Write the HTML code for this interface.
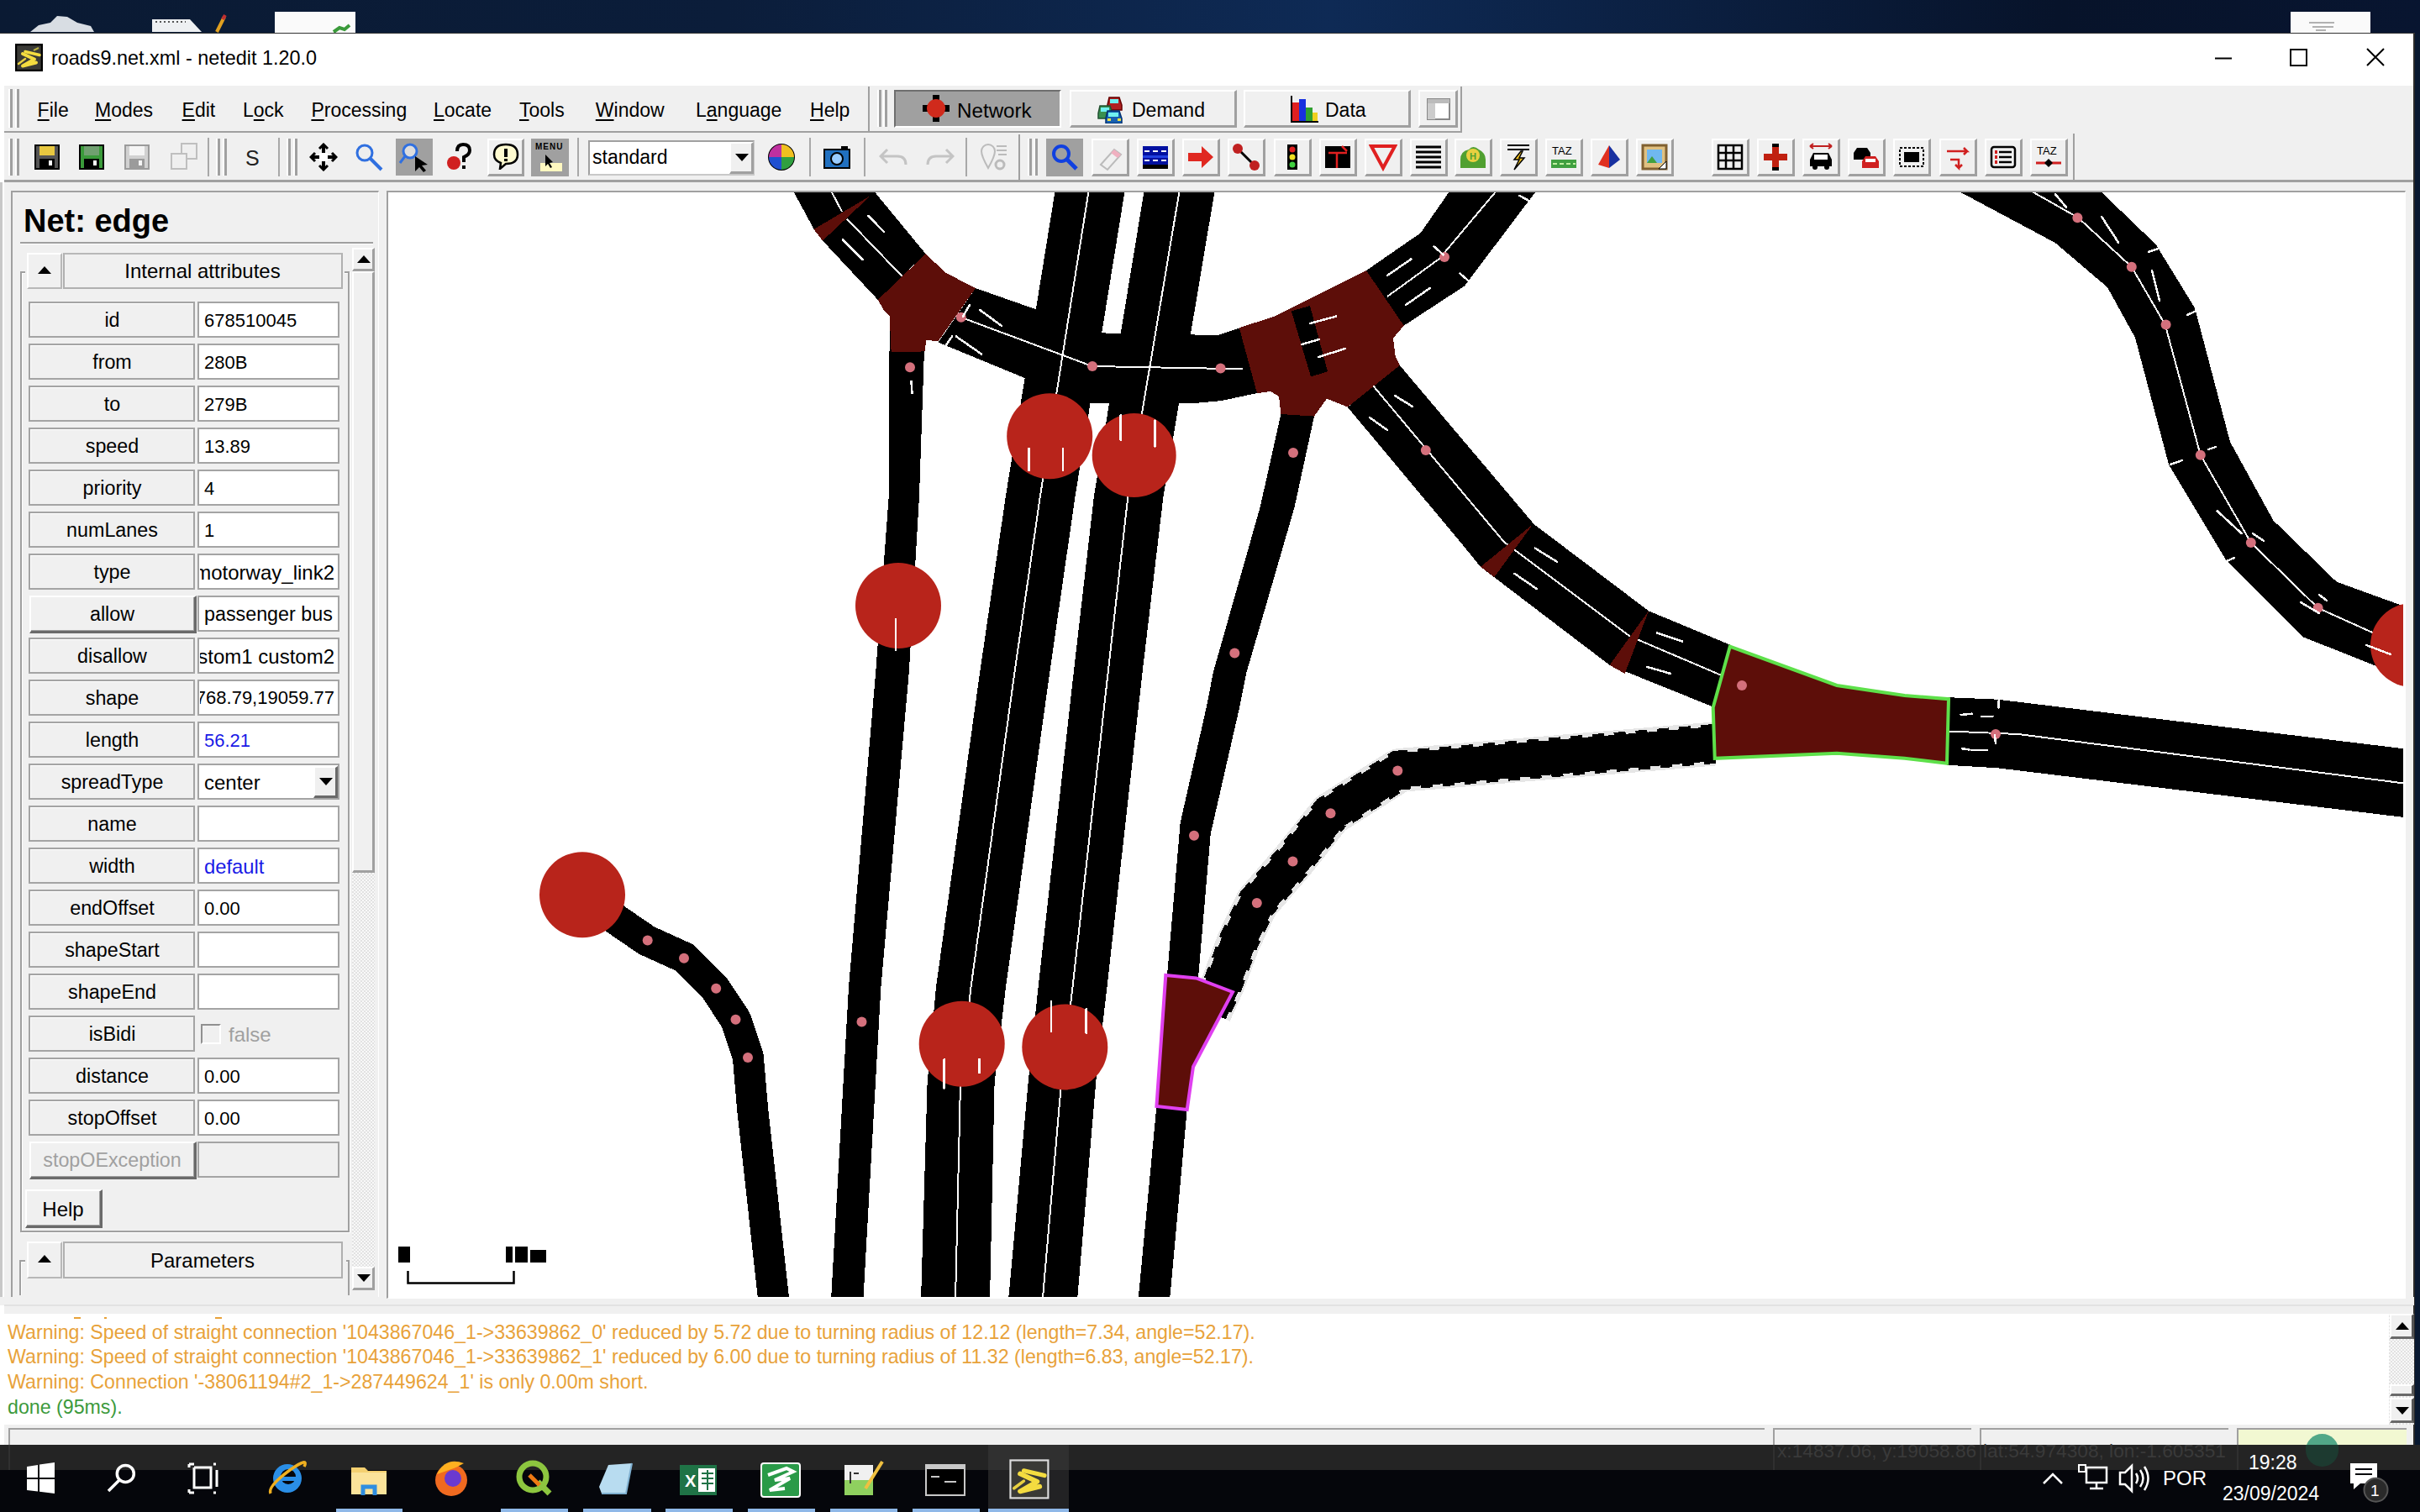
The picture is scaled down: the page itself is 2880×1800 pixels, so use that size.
<!DOCTYPE html>
<html><head><meta charset="utf-8">
<style>
*{margin:0;padding:0;box-sizing:border-box}
html,body{width:2880px;height:1800px;overflow:hidden;background:#081830;font-family:"Liberation Sans",sans-serif;color:#000}
.a{position:absolute}
.t{position:absolute;white-space:nowrap;line-height:1}
.btn{position:absolute;background:#f0f0f0;border-top:2px solid #fff;border-left:2px solid #fff;border-right:3px solid #a0a0a0;border-bottom:3px solid #a0a0a0}
.fld{position:absolute;background:#fff;border:3px solid #a0a0a0;border-right-color:#c8c8c8;border-bottom-color:#c8c8c8}
.grip{position:absolute;width:5px;border-left:2px solid #fff;border-right:3px solid #a0a0a0}
.u{text-decoration:underline;text-decoration-thickness:2px;text-underline-offset:3px}
</style></head><body>
<div class="a" style="left:0;top:0;width:2880px;height:40px;background:linear-gradient(90deg,#0a1a33 0%,#0b1d3a 30%,#0e2a55 55%,#0b1f40 70%,#07132a 85%,#081530 100%)"></div><svg class="a" style="left:0;top:0" width="2880" height="40"><path d="M36 38 L46 30 L60 27 L68 19 L80 20 L92 27 L108 31 L112 38 Z" fill="#d8dde3"/><path d="M181 38 L181 23 L226 23 L240 38 Z" fill="#eef0f2"/><path d="M185 26 h36" stroke="#555" stroke-width="2" stroke-dasharray="2 3"/><path d="M258 38 L267 20" stroke="#e0a020" stroke-width="4"/><path d="M265 23 L268 18" stroke="#c03030" stroke-width="4"/><rect x="327" y="14" width="96" height="25" fill="#fafafa"/><path d="M397 38 L404 33 L410 35 L416 30" stroke="#3a9a3a" stroke-width="4" fill="none"/><rect x="2726" y="14" width="95" height="25" fill="#fafafa"/><path d="M2748 27 h30 M2752 32 h25 M2756 36 h12" stroke="#999" stroke-width="1.5"/></svg><div class="a" style="left:0;top:40px;width:2873px;height:1710px;background:#f0f0f0"></div><div class="a" style="left:2872px;top:39px;width:2px;height:1711px;background:#2a2a2a"></div><div class="a" style="left:0;top:39px;width:2874px;height:1px;background:#333"></div><div class="a" style="left:0;top:40px;width:2872px;height:62px;background:#fff"></div><div class="a" style="left:0;top:40px;width:5px;height:1710px;background:#fff"></div><svg class="a" style="left:18px;top:52px" width="33" height="33"><rect x="1" y="1" width="31" height="31" fill="#3a3a36" stroke="#000" stroke-width="2.5"/><path d="M12 9.5 L29 13.5" stroke="#f4dc40" stroke-width="3.5" stroke-linecap="round"/><path d="M9 12 L23 18.5 L9 26.5 L25 22.5" stroke="#f4dc40" stroke-width="4" fill="none" stroke-linejoin="round" stroke-linecap="round"/><path d="M4 24 L12 18" stroke="#e8d040" stroke-width="2.5" stroke-linecap="round"/><path d="M22 8 L28 5" stroke="#b8b040" stroke-width="2"/></svg><div class="t" style="left:61px;top:58px;font-size:23.4px;color:#000">roads9.net.xml - netedit 1.20.0</div><svg class="a" style="left:2600px;top:40px" width="272" height="62"><path d="M36 29.5 h20" stroke="#000" stroke-width="2"/><rect x="126" y="19" width="19" height="19" stroke="#000" stroke-width="2" fill="none"/><path d="M217 18 L237 38 M237 18 L217 38" stroke="#000" stroke-width="2"/></svg><div class="a" style="left:5px;top:102px;width:2867px;height:55px;background:#f0f0f0"></div><div class="a" style="left:5px;top:156px;width:1735px;height:2px;background:#a0a0a0"></div><div class="a" style="left:2467px;top:159px;width:2px;height:2px;background:#a0a0a0"></div><div class="grip" style="left:10px;top:106px;height:46px"></div><div class="grip" style="left:18px;top:106px;height:46px"></div><div class="t" style="left:44.6px;top:120px;font-size:23px"><span class="u">F</span>ile</div><div class="t" style="left:113px;top:120px;font-size:23px"><span class="u">M</span>odes</div><div class="t" style="left:216.6px;top:120px;font-size:23px"><span class="u">E</span>dit</div><div class="t" style="left:289px;top:120px;font-size:23px">L<span class="u">o</span>ck</div><div class="t" style="left:370.4px;top:120px;font-size:23px"><span class="u">P</span>rocessing</div><div class="t" style="left:516px;top:120px;font-size:23px"><span class="u">L</span>ocate</div><div class="t" style="left:618px;top:120px;font-size:23px"><span class="u">T</span>ools</div><div class="t" style="left:708.8px;top:120px;font-size:23px"><span class="u">W</span>indow</div><div class="t" style="left:828px;top:120px;font-size:23px">L<span class="u">a</span>nguage</div><div class="t" style="left:964px;top:120px;font-size:23px"><span class="u">H</span>elp</div><div class="a" style="left:1033px;top:103px;width:2px;height:54px;background:#a0a0a0"></div><div class="grip" style="left:1044px;top:107px;height:44px"></div><div class="grip" style="left:1051px;top:107px;height:44px"></div><div class="a" style="left:1064px;top:107px;width:199px;height:45px;background:#a0a0a0;border-top:2px solid #6e6e6e;border-left:2px solid #6e6e6e;border-bottom:2px solid #fff;border-right:2px solid #fff"></div><svg class="a" style="left:1097px;top:112px" width="34" height="34"><rect x="13" y="1" width="8" height="6" fill="#000"/><rect x="13" y="27" width="8" height="6" fill="#000"/><rect x="1" y="13" width="6" height="8" fill="#000"/><rect x="27" y="13" width="6" height="8" fill="#000"/><circle cx="17" cy="17" r="11" fill="#d02a1c"/></svg><div class="t" style="left:1139px;top:119.5px;font-size:24.2px">Network</div><div class="btn" style="left:1273px;top:107px;width:199px;height:45px"></div><svg class="a" style="left:1305px;top:111px" width="36" height="36"><path d="M13 14 L15 5 H27 L30 14 V20 H13 Z" fill="#b02020" stroke="#600" stroke-width="1.5"/><rect x="16" y="7" width="10" height="5" fill="#70f0f0"/><path d="M2 24 L4 15 H16 L19 24 V30 H2 Z" fill="#3a9050" stroke="#205030" stroke-width="1.5"/><rect x="5" y="17" width="10" height="5" fill="#70f0f0"/><path d="M11 30 L13 21 H27 L30 30 V36 H11 Z" fill="#1860b0" stroke="#003070" stroke-width="1.5"/><rect x="14" y="23" width="12" height="5" fill="#70f0f0"/><rect x="13" y="30" width="4" height="3" fill="#f0e040"/><rect x="25" y="30" width="4" height="3" fill="#f0e040"/></svg><div class="t" style="left:1347px;top:120px;font-size:23px">Demand</div><div class="btn" style="left:1480px;top:107px;width:199px;height:45px"></div><svg class="a" style="left:1536px;top:112px" width="34" height="34"><rect x="2" y="10" width="8" height="22" fill="#e02020"/><rect x="10" y="6" width="8" height="26" fill="#1830e0"/><rect x="18" y="16" width="8" height="16" fill="#30a030"/><rect x="26" y="22" width="6" height="10" fill="#f0d020"/><path d="M1 2 v31 h32" stroke="#000" stroke-width="2" fill="none"/></svg><div class="t" style="left:1577px;top:120px;font-size:23px">Data</div><div class="btn" style="left:1688px;top:107px;width:47px;height:45px"></div><svg class="a" style="left:1697px;top:116px" width="30" height="28"><rect x="2" y="2" width="26" height="24" fill="#fff" stroke="#888" stroke-width="2"/><rect x="2" y="2" width="26" height="5" fill="#bbb"/><rect x="2" y="7" width="9" height="19" fill="#ccc"/></svg><div class="a" style="left:1738px;top:103px;width:2px;height:54px;background:#a0a0a0"></div><div class="a" style="left:5px;top:214px;width:2867px;height:3px;background:#a0a0a0"></div><div class="grip" style="left:10px;top:165px;height:44px"></div><div class="grip" style="left:18px;top:165px;height:44px"></div><div class="grip" style="left:257px;top:165px;height:44px"></div><div class="grip" style="left:265px;top:165px;height:44px"></div><div class="grip" style="left:341px;top:165px;height:44px"></div><div class="grip" style="left:349px;top:165px;height:44px"></div><div class="grip" style="left:1223px;top:165px;height:44px"></div><div class="grip" style="left:1230px;top:165px;height:44px"></div><div class="a" style="left:247px;top:164px;width:2px;height:46px;background:#a8a8a8"></div><div class="a" style="left:331px;top:164px;width:2px;height:46px;background:#a8a8a8"></div><div class="a" style="left:687px;top:164px;width:2px;height:46px;background:#a8a8a8"></div><div class="a" style="left:963px;top:164px;width:2px;height:46px;background:#a8a8a8"></div><div class="a" style="left:1028px;top:164px;width:2px;height:46px;background:#a8a8a8"></div><div class="a" style="left:1149px;top:164px;width:2px;height:46px;background:#a8a8a8"></div><div class="a" style="left:1212px;top:160px;width:2px;height:56px;background:#a0a0a0"></div><div class="a" style="left:2467px;top:160px;width:2px;height:56px;background:#a0a0a0"></div><svg class="a" style="left:41px;top:172px;" width="30" height="30"><rect x="1" y="1" width="28" height="28" fill="#555" stroke="#000" stroke-width="2"/><rect x="6" y="2" width="18" height="11" fill="#e8c840"/><rect x="6" y="17" width="18" height="11" fill="#000"/><rect x="17" y="19" width="4" height="6" fill="#fff"/></svg><svg class="a" style="left:94px;top:172px;" width="30" height="30"><rect x="1" y="1" width="28" height="28" fill="#3a9a3a" stroke="#000" stroke-width="2"/><rect x="6" y="2" width="18" height="11" fill="#70a070"/><rect x="6" y="17" width="18" height="11" fill="#000"/><rect x="17" y="19" width="4" height="6" fill="#fff"/></svg><svg class="a" style="left:148px;top:172px;opacity:.35;" width="30" height="30"><rect x="1" y="1" width="28" height="28" fill="#999" stroke="#000" stroke-width="2"/><rect x="6" y="2" width="18" height="11" fill="#fff"/><rect x="6" y="17" width="18" height="11" fill="#000"/><rect x="17" y="19" width="4" height="6" fill="#fff"/></svg><svg class="a" style="left:202px;top:170px;opacity:.4" width="34" height="34"><rect x="14" y="1" width="18" height="18" fill="#eee" stroke="#777" stroke-width="2"/><rect x="2" y="13" width="18" height="18" fill="#eee" stroke="#777" stroke-width="2"/></svg><div class="t" style="left:292px;top:176px;font-size:25px;color:#222">S</div><svg class="a" style="left:368px;top:170px" width="34" height="34"><path d="M17 2 L17 32 M2 17 L32 17" stroke="#000" stroke-width="4"/><path d="M12 7 L17 2 L22 7 M12 27 L17 32 L22 27 M7 12 L2 17 L7 22 M27 12 L32 17 L27 22" stroke="#000" stroke-width="3" fill="none"/><rect x="12" y="12" width="10" height="10" fill="#fff"/></svg><svg class="a" style="left:422px;top:170px" width="34" height="34"><circle cx="12" cy="12" r="9" fill="#eee" stroke="#3070e0" stroke-width="3"/><path d="M19 19 L32 32" stroke="#3070e0" stroke-width="4"/></svg><div class="a" style="left:471px;top:165px;width:44px;height:44px;background:#a0a0a0"></div><svg class="a" style="left:474px;top:168px" width="38" height="38"><circle cx="14" cy="12" r="8" fill="#ddd" stroke="#3070e0" stroke-width="3"/><path d="M8 18 L2 26" stroke="#3070e0" stroke-width="3"/><path d="M20 18 L20 36 L25 31 L30 37 L33 35 L28 29 L35 28 Z" fill="#000"/></svg><svg class="a" style="left:530px;top:170px" width="34" height="34"><circle cx="10" cy="24" r="8" fill="#d02020"/><path d="M14 10 Q14 2 21 2 Q29 2 29 9 Q29 14 22 17 L22 23" stroke="#000" stroke-width="4" fill="none"/><rect x="20" y="27" width="4" height="4" fill="#000"/></svg><div class="btn" style="left:580px;top:165px;width:44px;height:45px"></div><svg class="a" style="left:586px;top:170px" width="32" height="32"><path d="M16 2 Q30 2 30 14 Q30 25 16 25 L9 31 L10 24 Q2 21 2 14 Q2 2 16 2 Z" fill="#fffbd0" stroke="#000" stroke-width="2.5"/><rect x="14" y="7" width="4" height="10" fill="#000"/><rect x="14" y="19" width="4" height="3" fill="#000"/></svg><div class="a" style="left:632px;top:165px;width:45px;height:45px;background:#a0a0a0"></div><div class="t" style="left:637px;top:170px;font-size:10px;font-weight:bold;letter-spacing:1px">MENU</div><svg class="a" style="left:637px;top:182px" width="36" height="24"><rect x="6" y="12" width="26" height="10" fill="#fff8c0"/><path d="M12 2 L12 16 L15 13 L18 18 L20 17 L17 12 L21 11 Z" fill="#000"/></svg><div class="fld" style="left:700px;top:167px;width:198px;height:42px;border-width:2px"></div><div class="t" style="left:705px;top:176px;font-size:23px">standard</div><div class="btn" style="left:868px;top:169px;width:29px;height:38px"></div><svg class="a" style="left:873px;top:182px" width="20" height="12"><path d="M2 1 L18 1 L10 10 Z" fill="#000"/></svg><svg class="a" style="left:913px;top:170px" width="34" height="34"><circle cx="17" cy="17" r="15" fill="#e06020" stroke="#000" stroke-width="2"/><path d="M17 17 L17 2 A15 15 0 0 1 32 17 Z" fill="#f0c020"/><path d="M17 17 L32 17 A15 15 0 0 1 17 32 Z" fill="#30a040"/><path d="M17 17 L17 32 A15 15 0 0 1 2 17 Z" fill="#2050d0"/><path d="M17 17 L2 17 A15 15 0 0 1 17 2 Z" fill="#c030a0"/></svg><svg class="a" style="left:979px;top:172px" width="34" height="30"><rect x="2" y="6" width="30" height="22" fill="#2070c0" stroke="#000" stroke-width="2"/><circle cx="17" cy="17" r="7" fill="#9cf" stroke="#000" stroke-width="2"/><rect x="22" y="2" width="8" height="4" fill="#000"/></svg><svg class="a" style="left:1046px;top:172px;opacity:.5" width="90" height="30"><path d="M10 6 L2 14 L10 22 M2 14 H22 Q32 14 32 24" stroke="#999" stroke-width="3" fill="none"/><path d="M80 6 L88 14 L80 22 M88 14 H68 Q58 14 58 24" stroke="#999" stroke-width="3" fill="none"/></svg><svg class="a" style="left:1166px;top:170px;opacity:.5" width="34" height="34"><path d="M10 30 Q2 16 2 10 A8 8 0 0 1 18 10 Q18 16 10 30Z" fill="none" stroke="#888" stroke-width="2"/><path d="M20 4 h12 M20 9 h12 M22 14 h10" stroke="#888" stroke-width="2"/><circle cx="24" cy="26" r="5" fill="none" stroke="#888" stroke-width="3"/></svg><div class="a" style="left:1245px;top:165px;width:44px;height:45px;background:#a0a0a0"></div><svg class="a" style="left:1250px;top:170px" width="34" height="34"><circle cx="13" cy="13" r="9" fill="none" stroke="#1040e0" stroke-width="4"/><path d="M19 19 L31 31" stroke="#1040e0" stroke-width="5"/></svg><div class="btn" style="left:1299px;top:165px;width:45px;height:45px"></div><div class="btn" style="left:1353px;top:165px;width:45px;height:45px"></div><div class="btn" style="left:1407px;top:165px;width:45px;height:45px"></div><div class="btn" style="left:1461px;top:165px;width:45px;height:45px"></div><div class="btn" style="left:1516px;top:165px;width:45px;height:45px"></div><div class="btn" style="left:1570px;top:165px;width:45px;height:45px"></div><div class="btn" style="left:1624px;top:165px;width:45px;height:45px"></div><div class="btn" style="left:1678px;top:165px;width:45px;height:45px"></div><div class="btn" style="left:1731px;top:165px;width:45px;height:45px"></div><div class="btn" style="left:1785px;top:165px;width:45px;height:45px"></div><div class="btn" style="left:1839px;top:165px;width:45px;height:45px"></div><div class="btn" style="left:1893px;top:165px;width:45px;height:45px"></div><div class="btn" style="left:1947px;top:165px;width:45px;height:45px"></div><div class="btn" style="left:2037px;top:165px;width:45px;height:45px"></div><div class="btn" style="left:2091px;top:165px;width:45px;height:45px"></div><div class="btn" style="left:2145px;top:165px;width:45px;height:45px"></div><div class="btn" style="left:2199px;top:165px;width:45px;height:45px"></div><div class="btn" style="left:2253px;top:165px;width:45px;height:45px"></div><div class="btn" style="left:2308px;top:165px;width:45px;height:45px"></div><div class="btn" style="left:2362px;top:165px;width:45px;height:45px"></div><div class="btn" style="left:2416px;top:165px;width:45px;height:45px"></div><svg class="a" style="left:1304px;top:170px" width="34" height="34"><path d="M6 26 L22 8 L30 14 L14 32 Z" fill="#f0f0f0" stroke="#bbb" stroke-width="2"/><path d="M18 12 L26 18 L30 14 L22 8 Z" fill="#f0b0c0"/></svg><svg class="a" style="left:1358px;top:170px" width="34" height="34"><rect x="2" y="4" width="30" height="22" fill="#0010a0"/><rect x="2" y="15" width="30" height="3" fill="#2040e0"/><path d="M4 10 h6 M14 10 h6 M24 10 h6 M4 21 h6 M14 21 h6 M24 21 h6" stroke="#fff" stroke-width="2"/><rect x="2" y="26" width="30" height="5" fill="#000"/></svg><svg class="a" style="left:1412px;top:170px" width="34" height="34"><path d="M2 12 H18 V4 L32 17 L18 30 V22 H2 Z" fill="#e02820"/></svg><svg class="a" style="left:1466px;top:170px" width="34" height="34"><path d="M7 7 L27 27" stroke="#000" stroke-width="3"/><circle cx="7" cy="7" r="6" fill="#c02020"/><circle cx="27" cy="27" r="6" fill="#c02020"/></svg><svg class="a" style="left:1521px;top:170px" width="34" height="34"><rect x="11" y="2" width="12" height="30" fill="#000"/><circle cx="17" cy="8" r="3.5" fill="#e02020"/><circle cx="17" cy="17" r="3.5" fill="#f0e020"/><circle cx="17" cy="26" r="3.5" fill="#40d040"/></svg><svg class="a" style="left:1575px;top:170px" width="34" height="34"><rect x="2" y="4" width="30" height="26" fill="#000"/><path d="M6 12 H28 M16 12 V30 M22 4 L28 10" stroke="#e02020" stroke-width="2.5" fill="none"/></svg><svg class="a" style="left:1629px;top:170px" width="34" height="34"><path d="M3 4 H31 L17 30 Z" fill="none" stroke="#e02020" stroke-width="4"/></svg><svg class="a" style="left:1683px;top:170px" width="34" height="34"><path d="M2 5 H32 M2 11 H32 M2 17 H32 M2 23 H32 M2 29 H32" stroke="#000" stroke-width="3"/></svg><svg class="a" style="left:1736px;top:170px" width="34" height="34"><path d="M2 30 V20 Q2 10 12 8 Q17 2 24 8 Q32 12 32 20 V30 Z" fill="#50a030"/><circle cx="17" cy="15" r="8" fill="#e8d040"/><text x="13" y="20" font-size="11" font-family="Liberation Sans" font-weight="bold" fill="#50a030">H</text></svg><svg class="a" style="left:1790px;top:170px" width="34" height="34"><path d="M4 3 H30 M4 8 H30" stroke="#000" stroke-width="2"/><path d="M20 10 L12 20 H18 L12 32 L24 18 H18 L22 10 Z" fill="#f0c020" stroke="#000" stroke-width="1.5"/></svg><svg class="a" style="left:1844px;top:170px" width="34" height="34"><text x="3" y="14" font-size="13" font-family="Liberation Sans" fill="#000">TAZ</text><rect x="2" y="20" width="30" height="10" fill="#40a040"/><path d="M4 25 h5 M12 25 h5 M20 25 h5 M28 25 h3" stroke="#c0f0a0" stroke-width="2"/></svg><svg class="a" style="left:1898px;top:170px" width="34" height="34"><path d="M17 3 L4 26 L17 30 Z" fill="#e03020"/><path d="M17 3 L17 30 L30 20 Z" fill="#1830a0"/></svg><svg class="a" style="left:1952px;top:170px" width="34" height="34"><rect x="3" y="3" width="28" height="28" fill="#e0c080" stroke="#806030" stroke-width="3"/><rect x="8" y="8" width="18" height="16" fill="#70b8f0"/><path d="M8 24 L14 16 L20 24 Z" fill="#40a040"/><path d="M22 31 L31 22 V31 Z" fill="#fff" stroke="#000" stroke-width="1"/></svg><svg class="a" style="left:2042px;top:170px" width="34" height="34"><path d="M3 3 H31 V31 H3 Z M3 12 H31 M3 21 H31 M12 3 V31 M21 3 V31" stroke="#000" stroke-width="2.5" fill="none"/></svg><svg class="a" style="left:2096px;top:170px" width="34" height="34"><path d="M17 3 V31 M3 17 H31" stroke="#c02010" stroke-width="8"/><rect x="13" y="1" width="8" height="4" fill="#000"/><rect x="13" y="29" width="8" height="4" fill="#000"/></svg><svg class="a" style="left:2150px;top:170px" width="34" height="34"><path d="M4 4 H30 M4 4 L8 1 M4 4 L8 7 M30 4 L26 1 M30 4 L26 7" stroke="#c02020" stroke-width="2" fill="none"/><path d="M4 28 V20 L8 12 H26 L30 20 V28 Z" fill="#000"/><rect x="9" y="14" width="16" height="6" fill="#fff"/><circle cx="10" cy="29" r="3" fill="#000"/><circle cx="24" cy="29" r="3" fill="#000"/></svg><svg class="a" style="left:2204px;top:170px" width="34" height="34"><path d="M2 20 V12 L6 6 H18 L22 12 V20 Z" fill="#000"/><path d="M12 30 V22 L16 16 H28 L32 22 V30 Z" fill="#d02020"/><rect x="16" y="19" width="12" height="4" fill="#fff"/></svg><svg class="a" style="left:2258px;top:170px" width="34" height="34"><rect x="3" y="6" width="28" height="22" fill="none" stroke="#000" stroke-width="2" stroke-dasharray="3 2"/><rect x="8" y="11" width="18" height="12" fill="#000"/></svg><svg class="a" style="left:2313px;top:170px" width="34" height="34"><path d="M4 10 H28 L24 6 M28 10 L24 14 M8 20 H18 V30 L14 26 M18 30 L22 26" stroke="#d02020" stroke-width="2.5" fill="none"/></svg><svg class="a" style="left:2367px;top:170px" width="34" height="34"><rect x="3" y="5" width="28" height="24" rx="3" fill="none" stroke="#000" stroke-width="2.5"/><path d="M12 11 H27 M12 17 H27 M12 23 H27" stroke="#000" stroke-width="2.5"/><rect x="7" y="9" width="3" height="4" fill="#d02020"/><rect x="7" y="15" width="3" height="4" fill="#d02020"/><rect x="7" y="21" width="3" height="4" fill="#d02020"/></svg><svg class="a" style="left:2421px;top:170px" width="34" height="34"><text x="3" y="14" font-size="13" font-family="Liberation Sans" fill="#000">TAZ</text><path d="M2 24 H32" stroke="#d02020" stroke-width="3"/><path d="M17 19 L22 24 L17 29 L12 24 Z" fill="#000"/></svg><div class="a" style="left:0;top:217px;width:3px;height:1336px;background:#c8c8c8"></div><div class="a" style="left:13px;top:227px;width:438px;height:1318px;border-top:2px solid #a0a0a0;border-left:2px solid #a0a0a0;border-right:1px solid #fff;border-bottom:1px solid #fff"></div><div class="t" style="left:28px;top:243.8px;font-size:38px;font-weight:bold">Net: edge</div><div class="a" style="left:24px;top:288px;width:420px;height:2px;background:#a0a0a0"></div><div class="a" style="left:24px;top:290px;width:420px;height:1px;background:#fff"></div><div class="a" style="left:419px;top:295px;width:27px;height:1240px;background:repeating-conic-gradient(#e2e2e2 0 25%,#f8f8f8 0 50%) 0 0/4px 4px"></div><div class="btn" style="left:419px;top:295px;width:27px;height:28px"></div><svg class="a" style="left:423px;top:301px" width="20" height="14"><path d="M2 12 L18 12 L10 3 Z" fill="#000"/></svg><div class="btn" style="left:419px;top:323px;width:27px;height:716px"></div><div class="btn" style="left:419px;top:1508px;width:27px;height:28px"></div><svg class="a" style="left:423px;top:1514px" width="20" height="14"><path d="M2 3 L18 3 L10 12 Z" fill="#000"/></svg><div class="a" style="left:24px;top:323px;width:392px;height:1144px;border:2px solid #a0a0a0;border-right-color:#a0a0a0;border-bottom-color:#a0a0a0;box-shadow:inset 1px 1px 0 #fff, 1px 1px 0 #fff"></div><div class="a" style="left:30px;top:299px;width:380px;height:46px;background:#f0f0f0"></div><div class="a" style="left:32px;top:301px;width:42px;height:43px;background:#f0f0f0;border:2px solid #b8b8b8;border-top-color:#fff;border-left-color:#fff"></div><svg class="a" style="left:43px;top:314px" width="20" height="14"><path d="M2 12 L18 12 L10 3 Z" fill="#000"/></svg><div class="a" style="left:75px;top:301px;width:333px;height:43px;background:#f0f0f0;border:2px solid #b0b0b0;border-top-color:#b8b8b8"></div><div class="t" style="left:41.0px;top:310.7px;width:400px;text-align:center;font-size:24px;">Internal attributes</div><div class="a" style="left:34px;top:359px;width:198px;height:43px;background:#f0f0f0;border:2px solid #a4a4a4;box-shadow:inset 1px 1px 0 #fff"></div><div class="t" style="left:38.5px;top:370.3px;width:190px;text-align:center;font-size:23.3px;color:#000">id</div><div class="a" style="left:235px;top:359px;width:169px;height:43px;background:#fff;border:2px solid #a4a4a4"></div><div class="t" style="left:243px;top:371.4px;font-size:22px;">678510045</div><div class="a" style="left:34px;top:409px;width:198px;height:43px;background:#f0f0f0;border:2px solid #a4a4a4;box-shadow:inset 1px 1px 0 #fff"></div><div class="t" style="left:38.5px;top:420.3px;width:190px;text-align:center;font-size:23.3px;color:#000">from</div><div class="a" style="left:235px;top:409px;width:169px;height:43px;background:#fff;border:2px solid #a4a4a4"></div><div class="t" style="left:243px;top:421.4px;font-size:22px;">280B</div><div class="a" style="left:34px;top:459px;width:198px;height:43px;background:#f0f0f0;border:2px solid #a4a4a4;box-shadow:inset 1px 1px 0 #fff"></div><div class="t" style="left:38.5px;top:470.3px;width:190px;text-align:center;font-size:23.3px;color:#000">to</div><div class="a" style="left:235px;top:459px;width:169px;height:43px;background:#fff;border:2px solid #a4a4a4"></div><div class="t" style="left:243px;top:471.4px;font-size:22px;">279B</div><div class="a" style="left:34px;top:509px;width:198px;height:43px;background:#f0f0f0;border:2px solid #a4a4a4;box-shadow:inset 1px 1px 0 #fff"></div><div class="t" style="left:38.5px;top:520.3px;width:190px;text-align:center;font-size:23.3px;color:#000">speed</div><div class="a" style="left:235px;top:509px;width:169px;height:43px;background:#fff;border:2px solid #a4a4a4"></div><div class="t" style="left:243px;top:521.4px;font-size:22px;">13.89</div><div class="a" style="left:34px;top:559px;width:198px;height:43px;background:#f0f0f0;border:2px solid #a4a4a4;box-shadow:inset 1px 1px 0 #fff"></div><div class="t" style="left:38.5px;top:570.3px;width:190px;text-align:center;font-size:23.3px;color:#000">priority</div><div class="a" style="left:235px;top:559px;width:169px;height:43px;background:#fff;border:2px solid #a4a4a4"></div><div class="t" style="left:243px;top:571.4px;font-size:22px;">4</div><div class="a" style="left:34px;top:609px;width:198px;height:43px;background:#f0f0f0;border:2px solid #a4a4a4;box-shadow:inset 1px 1px 0 #fff"></div><div class="t" style="left:38.5px;top:620.3px;width:190px;text-align:center;font-size:23.3px;color:#000">numLanes</div><div class="a" style="left:235px;top:609px;width:169px;height:43px;background:#fff;border:2px solid #a4a4a4"></div><div class="t" style="left:243px;top:621.4px;font-size:22px;">1</div><div class="a" style="left:34px;top:659px;width:198px;height:43px;background:#f0f0f0;border:2px solid #a4a4a4;box-shadow:inset 1px 1px 0 #fff"></div><div class="t" style="left:38.5px;top:670.3px;width:190px;text-align:center;font-size:23.3px;color:#000">type</div><div class="a" style="left:235px;top:659px;width:169px;height:43px;background:#fff;border:2px solid #a4a4a4"></div><div class="a" style="left:238px;top:661px;width:163px;height:39px;overflow:hidden"><div class="t" style="right:3px;top:8.7px;font-size:24px">motorway_link2</div></div><div class="a" style="left:35px;top:709px;width:199px;height:45px;background:#f0f0f0;border-top:2px solid #fff;border-left:2px solid #fff;border-right:3px solid #6a6a6a;border-bottom:3px solid #6a6a6a;box-shadow:inset -1px -1px 0 #a0a0a0"></div><div class="t" style="left:38.5px;top:720.3px;width:190px;text-align:center;font-size:23.3px;color:#000">allow</div><div class="a" style="left:235px;top:709px;width:169px;height:43px;background:#fff;border:2px solid #a4a4a4"></div><div class="t" style="left:243px;top:720.3px;font-size:23.3px;">passenger bus</div><div class="a" style="left:34px;top:759px;width:198px;height:43px;background:#f0f0f0;border:2px solid #a4a4a4;box-shadow:inset 1px 1px 0 #fff"></div><div class="t" style="left:38.5px;top:770.3px;width:190px;text-align:center;font-size:23.3px;color:#000">disallow</div><div class="a" style="left:235px;top:759px;width:169px;height:43px;background:#fff;border:2px solid #a4a4a4"></div><div class="a" style="left:238px;top:761px;width:163px;height:39px;overflow:hidden"><div class="t" style="right:3px;top:8.7px;font-size:24px">custom1 custom2</div></div><div class="a" style="left:34px;top:809px;width:198px;height:43px;background:#f0f0f0;border:2px solid #a4a4a4;box-shadow:inset 1px 1px 0 #fff"></div><div class="t" style="left:38.5px;top:820.3px;width:190px;text-align:center;font-size:23.3px;color:#000">shape</div><div class="a" style="left:235px;top:809px;width:169px;height:43px;background:#fff;border:2px solid #a4a4a4"></div><div class="a" style="left:238px;top:811px;width:163px;height:39px;overflow:hidden"><div class="t" style="right:3px;top:8.7px;font-size:22px">14768.79,19059.77</div></div><div class="a" style="left:34px;top:859px;width:198px;height:43px;background:#f0f0f0;border:2px solid #a4a4a4;box-shadow:inset 1px 1px 0 #fff"></div><div class="t" style="left:38.5px;top:870.3px;width:190px;text-align:center;font-size:23.3px;color:#000">length</div><div class="a" style="left:235px;top:859px;width:169px;height:43px;background:#fff;border:2px solid #a4a4a4"></div><div class="t" style="left:243px;top:871.4px;font-size:22px;color:#1a1ae6">56.21</div><div class="a" style="left:34px;top:909px;width:198px;height:43px;background:#f0f0f0;border:2px solid #a4a4a4;box-shadow:inset 1px 1px 0 #fff"></div><div class="t" style="left:38.5px;top:920.3px;width:190px;text-align:center;font-size:23.3px;color:#000">spreadType</div><div class="a" style="left:235px;top:909px;width:169px;height:43px;background:#fff;border:2px solid #a4a4a4"></div><div class="t" style="left:243px;top:919.7px;font-size:24px;">center</div><div class="a" style="left:373px;top:912px;width:29px;height:38px;background:#f0f0f0;border-top:2px solid #fff;border-left:2px solid #fff;border-right:3px solid #6a6a6a;border-bottom:3px solid #6a6a6a"></div><svg class="a" style="left:378px;top:925px" width="20" height="12"><path d="M2 1 L18 1 L10 10 Z" fill="#000"/></svg><div class="a" style="left:34px;top:959px;width:198px;height:43px;background:#f0f0f0;border:2px solid #a4a4a4;box-shadow:inset 1px 1px 0 #fff"></div><div class="t" style="left:38.5px;top:970.3px;width:190px;text-align:center;font-size:23.3px;color:#000">name</div><div class="a" style="left:235px;top:959px;width:169px;height:43px;background:#fff;border:2px solid #a4a4a4"></div><div class="a" style="left:34px;top:1009px;width:198px;height:43px;background:#f0f0f0;border:2px solid #a4a4a4;box-shadow:inset 1px 1px 0 #fff"></div><div class="t" style="left:38.5px;top:1020.3px;width:190px;text-align:center;font-size:23.3px;color:#000">width</div><div class="a" style="left:235px;top:1009px;width:169px;height:43px;background:#fff;border:2px solid #a4a4a4"></div><div class="t" style="left:243px;top:1019.9px;font-size:23.8px;color:#1a1ae6">default</div><div class="a" style="left:34px;top:1059px;width:198px;height:43px;background:#f0f0f0;border:2px solid #a4a4a4;box-shadow:inset 1px 1px 0 #fff"></div><div class="t" style="left:38.5px;top:1070.3px;width:190px;text-align:center;font-size:23.3px;color:#000">endOffset</div><div class="a" style="left:235px;top:1059px;width:169px;height:43px;background:#fff;border:2px solid #a4a4a4"></div><div class="t" style="left:243px;top:1071.4px;font-size:22px;">0.00</div><div class="a" style="left:34px;top:1109px;width:198px;height:43px;background:#f0f0f0;border:2px solid #a4a4a4;box-shadow:inset 1px 1px 0 #fff"></div><div class="t" style="left:38.5px;top:1120.3px;width:190px;text-align:center;font-size:23.3px;color:#000">shapeStart</div><div class="a" style="left:235px;top:1109px;width:169px;height:43px;background:#fff;border:2px solid #a4a4a4"></div><div class="a" style="left:34px;top:1159px;width:198px;height:43px;background:#f0f0f0;border:2px solid #a4a4a4;box-shadow:inset 1px 1px 0 #fff"></div><div class="t" style="left:38.5px;top:1170.3px;width:190px;text-align:center;font-size:23.3px;color:#000">shapeEnd</div><div class="a" style="left:235px;top:1159px;width:169px;height:43px;background:#fff;border:2px solid #a4a4a4"></div><div class="a" style="left:34px;top:1209px;width:198px;height:43px;background:#f0f0f0;border:2px solid #a4a4a4;box-shadow:inset 1px 1px 0 #fff"></div><div class="t" style="left:38.5px;top:1220.3px;width:190px;text-align:center;font-size:23.3px;color:#000">isBidi</div><div class="a" style="left:239px;top:1219px;width:24px;height:24px;border-top:2px solid #909090;border-left:2px solid #909090;border-right:2px solid #fff;border-bottom:2px solid #fff;background:#f0f0f0"></div><div class="t" style="left:272px;top:1219.7px;font-size:24px;color:#a0a0a0">false</div><div class="a" style="left:34px;top:1259px;width:198px;height:43px;background:#f0f0f0;border:2px solid #a4a4a4;box-shadow:inset 1px 1px 0 #fff"></div><div class="t" style="left:38.5px;top:1270.3px;width:190px;text-align:center;font-size:23.3px;color:#000">distance</div><div class="a" style="left:235px;top:1259px;width:169px;height:43px;background:#fff;border:2px solid #a4a4a4"></div><div class="t" style="left:243px;top:1271.4px;font-size:22px;">0.00</div><div class="a" style="left:34px;top:1309px;width:198px;height:43px;background:#f0f0f0;border:2px solid #a4a4a4;box-shadow:inset 1px 1px 0 #fff"></div><div class="t" style="left:38.5px;top:1320.3px;width:190px;text-align:center;font-size:23.3px;color:#000">stopOffset</div><div class="a" style="left:235px;top:1309px;width:169px;height:43px;background:#fff;border:2px solid #a4a4a4"></div><div class="t" style="left:243px;top:1321.4px;font-size:22px;">0.00</div><div class="a" style="left:35px;top:1359px;width:199px;height:45px;background:#f0f0f0;border-top:2px solid #fff;border-left:2px solid #fff;border-right:3px solid #6a6a6a;border-bottom:3px solid #6a6a6a;box-shadow:inset -1px -1px 0 #a0a0a0"></div><div class="t" style="left:38.5px;top:1370.3px;width:190px;text-align:center;font-size:23.3px;color:#a0a0a0">stopOException</div><div class="a" style="left:235px;top:1359px;width:169px;height:43px;background:#f0f0f0;border:2px solid #a4a4a4"></div><div class="a" style="left:30px;top:1416px;width:92px;height:46px;background:#f0f0f0;border-top:2px solid #fff;border-left:2px solid #fff;border-right:3px solid #6a6a6a;border-bottom:3px solid #6a6a6a;box-shadow:inset -1px -1px 0 #a0a0a0"></div><div class="t" style="left:30.0px;top:1427.7px;width:90px;text-align:center;font-size:24px;">Help</div><div class="a" style="left:23px;top:1500px;width:393px;height:42px;border:2px solid #a0a0a0;border-bottom:none;box-shadow:inset 1px 1px 0 #fff"></div><div class="a" style="left:30px;top:1476px;width:382px;height:47px;background:#f0f0f0"></div><div class="a" style="left:32px;top:1478px;width:42px;height:44px;background:#f0f0f0;border:2px solid #b8b8b8;border-top-color:#fff;border-left-color:#fff"></div><svg class="a" style="left:43px;top:1491px" width="20" height="14"><path d="M2 12 L18 12 L10 3 Z" fill="#000"/></svg><div class="a" style="left:75px;top:1478px;width:333px;height:44px;background:#f0f0f0;border:2px solid #b0b0b0"></div><div class="t" style="left:41.0px;top:1488.7px;width:400px;text-align:center;font-size:24px;">Parameters</div><div class="a" style="left:0;top:1544px;width:2873px;height:10px;background:#f0f0f0"></div><div class="a" style="left:460px;top:227px;width:2403px;height:1319px;border-top:2px solid #a0a0a0;border-left:2px solid #a0a0a0;border-right:1px solid #fff;border-bottom:1px solid #fff;background:#fff"></div><svg class="a" style="left:0;top:0" width="2880" height="1800" viewBox="0 0 2880 1800"><defs><clipPath id="cv"><rect x="462" y="229" width="2398" height="1315"/></clipPath></defs><g clip-path="url(#cv)" shape-rendering="crispEdges"><polygon points="942.7,225.0 1038.0,225.0 1101.4,302.0 1044.8,357.0 979.0,286.5 968.5,272.6" fill="#000"/><polygon points="968.5,273.0 1036.0,233.0 979.0,286.5" fill="#5d0e09"/><path d="M990 229 L1002 252 M1008 260.7 L1074.6 330" stroke="#fff" stroke-width="2" fill="none"/><polygon points="1058.7,376.7 1057.8,590.0 1042.2,800.0 1010.0,1175.0 989.0,1548.0 1027.3,1548.0 1048.4,1175.0 1081.8,800.0 1094.0,590.0 1100.4,405.0" fill="#000"/><polygon points="1256.0,225.0 1197.0,590.0 1166.2,800.0 1114.0,1175.0 1103.6,1289.0 1096.0,1548.0 1178.0,1548.0 1183.6,1289.0 1197.0,1175.0 1249.3,800.0 1279.7,590.0 1339.0,225.0" fill="#000"/><polygon points="1362.0,225.0 1302.0,590.0 1277.8,800.0 1235.6,1175.0 1224.0,1285.0 1200.0,1548.0 1282.0,1548.0 1304.5,1285.0 1317.5,1175.0 1359.6,800.0 1384.6,590.0 1446.0,225.0" fill="#000"/><polygon points="1161.0,343.0 1232.0,368.0 1310.6,396.4 1449.0,399.0 1476.0,390.0 1496.0,468.0 1454.0,477.0 1426.6,479.5 1296.0,479.5 1215.8,448.5 1116.6,407.6" fill="#000"/><polyline points="1296,225 1238,590 1207.5,800 1155.5,1175 1143,1289 1137,1548" stroke="#fff" stroke-width="2" fill="none"/><polyline points="1404,225 1342.5,590 1318.7,800 1276.5,1175 1263.4,1285 1240.7,1548" stroke="#fff" stroke-width="2" fill="none"/><polygon points="1044.8,356.9 1101.4,302.3 1126.2,325.2 1161.0,343.0 1116.3,406.5 1102.4,404.5 1100.4,418.4 1060.7,419.4 1058.7,376.7 1052.8,370.8" fill="#5d0e09"/><polyline points="1143.8,377.8 1300,436 1479,439.3" stroke="#fff" stroke-width="2" fill="none"/><polygon points="1474.8,390.2 1517.0,376.6 1626.0,322.0 1670.7,387.7 1658.0,402.6 1660.8,425.0 1665.8,434.9 1603.8,484.5 1579.0,474.5 1564.0,495.6 1524.4,493.0 1522.0,472.0 1512.0,465.9 1496.0,468.3" fill="#5d0e09"/><polygon points="1536.8,370.4 1559.0,364.0 1580.0,442.3 1560.0,448.5" fill="#000"/><polygon points="1626.0,322.0 1690.6,277.4 1727.0,225.0 1830.0,225.0 1742.7,340.6 1670.7,387.7" fill="#000"/><polyline points="1651,353 1713,308 1781,227" stroke="#fff" stroke-width="2" fill="none"/><polygon points="1524.4,493.0 1499.6,604.0 1443.9,800.0 1436.2,840.0 1404.7,979.4 1389.0,1161.0 1426.0,1164.0 1440.7,993.0 1475.6,840.0 1483.6,800.0 1540.5,604.0 1564.0,495.6" fill="#000"/><polygon points="1376.4,1317.0 1354.5,1548.0 1392.0,1548.0 1412.7,1321.0" fill="#000"/><polygon points="1603.8,484.7 1737.7,645.0 1762.0,674.8 1915.6,791.8 2040.7,842.3 2058.8,767.6 1962.0,727.3 1825.5,624.0 1665.8,434.9" fill="#000"/><polyline points="1634.3,459.4 1789.8,645 1939.8,757.5 2048.7,804" stroke="#fff" stroke-width="2" fill="none"/><polygon points="1824.0,624.4 1762.0,674.8 1778.4,686.9" fill="#5d0e09"/><polygon points="1962.0,727.3 1915.6,791.8 1933.7,801.9" fill="#5d0e09"/><polygon points="2319.0,830.2 2377.5,832.7 2865.0,891.8 2865.0,973.5 2377.5,914.3 2316.6,910.7" fill="#000"/><polyline points="2319,870.5 2402,874 2865,933" stroke="#fff" stroke-width="2" fill="none"/><path d="M2040,885.5 L1665.5,917 L1583.5,969 L1538.5,1025.5 L1495.8,1075 L1474,1121 L1455,1172 L1440,1205" stroke="#e6e6e6" stroke-width="52" fill="none" stroke-linejoin="round"/><path d="M2040,885.5 L1665.5,917 L1583.5,969 L1538.5,1025.5 L1495.8,1075 L1474,1121 L1455,1172 L1440,1205" stroke="#000" stroke-width="41" fill="none"/><path d="M2040,885.5 L1665.5,917 L1583.5,969 L1538.5,1025.5 L1495.8,1075 L1474,1121 L1455,1172 L1440,1205" stroke="#000" stroke-width="47" stroke-dasharray="14 12" fill="none"/><polygon points="2058.8,769.6 2186.0,816.0 2266.6,828.0 2319.0,832.2 2317.0,908.8 2266.6,902.8 2186.0,896.7 2040.7,902.8 2038.7,842.3" fill="#5d0e09" stroke="#5ee04a" stroke-width="4" shape-rendering="auto"/><polygon points="1387.3,1161.0 1423.6,1164.5 1467.0,1181.0 1420.0,1270.0 1412.7,1321.0 1376.4,1317.0" fill="#5d0e09" stroke="#e040f0" stroke-width="4" shape-rendering="auto"/><polygon points="2326.0,225.0 2445.8,289.0 2508.0,342.0 2541.0,402.0 2581.0,553.0 2650.0,668.0 2740.0,758.0 2827.0,792.5 2870.0,809.0 2870.0,725.0 2780.8,692.7 2705.4,619.5 2654.0,526.0 2612.0,366.6 2565.6,291.0 2497.0,225.0" fill="#000"/><polyline points="2413,225 2473,259 2536.8,317.7 2576.7,386.5 2618.8,541.8 2678.8,646 2758.6,723.8 2870,774" stroke="#fff" stroke-width="2" fill="none"/><path d="M693,1065 L733.7,1095 L769.7,1119.6 L814,1139.7 L851,1176.7 L875.5,1213.8 L890.3,1258 L895.6,1320 L921,1550" stroke="#000" stroke-width="37" fill="none" stroke-linejoin="round"/><circle cx="1069" cy="721" r="51" fill="#b8241b" shape-rendering="auto"/><circle cx="1249.2" cy="519.2" r="51" fill="#b8241b" shape-rendering="auto"/><circle cx="1349.7" cy="542.1" r="50" fill="#b8241b" shape-rendering="auto"/><circle cx="1144.7" cy="1242.7" r="51" fill="#b8241b" shape-rendering="auto"/><circle cx="1267.3" cy="1246.4" r="51" fill="#b8241b" shape-rendering="auto"/><circle cx="693" cy="1065.2" r="51" fill="#b8241b" shape-rendering="auto"/><circle cx="2871" cy="768" r="50" fill="#b8241b" shape-rendering="auto"/><circle cx="1143.8" cy="377.8" r="6" fill="#d4707c" shape-rendering="auto"/><circle cx="1300" cy="436" r="6" fill="#d4707c" shape-rendering="auto"/><circle cx="1452.6" cy="438.6" r="6" fill="#d4707c" shape-rendering="auto"/><circle cx="1083" cy="437.3" r="6" fill="#d4707c" shape-rendering="auto"/><circle cx="1719" cy="306" r="6" fill="#d4707c" shape-rendering="auto"/><circle cx="1539" cy="539" r="6" fill="#d4707c" shape-rendering="auto"/><circle cx="1469.3" cy="777.6" r="6" fill="#d4707c" shape-rendering="auto"/><circle cx="1421" cy="994.7" r="6" fill="#d4707c" shape-rendering="auto"/><circle cx="1696.8" cy="536" r="6" fill="#d4707c" shape-rendering="auto"/><circle cx="2073" cy="816" r="6" fill="#d4707c" shape-rendering="auto"/><circle cx="2375" cy="874" r="6" fill="#d4707c" shape-rendering="auto"/><circle cx="1663.3" cy="917.6" r="6" fill="#d4707c" shape-rendering="auto"/><circle cx="1583.5" cy="968.2" r="6" fill="#d4707c" shape-rendering="auto"/><circle cx="1538.5" cy="1025.5" r="6" fill="#d4707c" shape-rendering="auto"/><circle cx="1495.8" cy="1075" r="6" fill="#d4707c" shape-rendering="auto"/><circle cx="2472.4" cy="259.2" r="6" fill="#d4707c" shape-rendering="auto"/><circle cx="2536.8" cy="317.7" r="6" fill="#d4707c" shape-rendering="auto"/><circle cx="2577.6" cy="386.5" r="6" fill="#d4707c" shape-rendering="auto"/><circle cx="2618.8" cy="541.8" r="6" fill="#d4707c" shape-rendering="auto"/><circle cx="2678.8" cy="646" r="6" fill="#d4707c" shape-rendering="auto"/><circle cx="2758.6" cy="723.8" r="6" fill="#d4707c" shape-rendering="auto"/><circle cx="770.7" cy="1119.6" r="6" fill="#d4707c" shape-rendering="auto"/><circle cx="814" cy="1140.7" r="6" fill="#d4707c" shape-rendering="auto"/><circle cx="852.2" cy="1176.7" r="6" fill="#d4707c" shape-rendering="auto"/><circle cx="875.5" cy="1213.8" r="6" fill="#d4707c" shape-rendering="auto"/><circle cx="890" cy="1259" r="6" fill="#d4707c" shape-rendering="auto"/><circle cx="1025.5" cy="1216.5" r="6" fill="#d4707c" shape-rendering="auto"/><path d="M1033 256.7 L1051.8 275.6 M1003 285.5 L1027 309.3 M1165.9 368.8 L1191.7 387.7 M1138 400.6 L1167.9 421.4 M1154 362.9 L1146 376.7 M1133 400.6 L1124 413.5 M1084.5 454 L1085.5 468 M1559 385 L1590 376.6 M1549 410 L1570 404 M1569 425 L1601 415 M1651 328 L1679.4 308.4 M1673 363 L1701.7 343 M1706.7 293.5 L1717.9 303.4 M1737.7 325.7 L1747.6 334.4 M1808 232.7 L1819.6 239 M1660 471 L1681 484 M1630 497 L1651 512 M1826.8 652.6 L1853 668.8 M1802.6 683 L1828.8 701 M1972 753.5 L2002 763.6 M1960 793.8 L1988.2 802 M2333.6 851 L2347 849.7 M2358 852.9 L2371.4 852.9 M2335 891.2 L2343.4 892.4 M2345.8 892.9 L2365.3 892.9 M2378.7 833.9 L2378.7 842.4 M2374 875 L2375 885 M2445.8 231 L2459 246.7 M2501 257.8 L2521.2 288.9 M2556.7 300 L2570 295.6 M2561 322 L2570 357.7 M2603 375 L2614 370 M2583 553 L2597 548 M2628 535 L2637 532 M2638.8 608.4 L2667.6 635 M2681 635 L2694 644 M2650 668 L2659 664 M2738 717 L2760 730 M2760 708 L2769 715 M2743 762 L2747 775 M2816.3 768 L2845 779 M1224.5 534 L1224.5 560 M1265 534 L1265 560 M1333.6 494 L1333.6 524 M1374.5 500.6 L1374.5 531.6 M1065.8 737 L1065.8 773.6 M1123.6 1261 L1123.6 1295.5 M1165.5 1261 L1165.5 1277 M1251 1191.8 L1251 1228 M1292.7 1201 L1292.7 1230" stroke="#fff" stroke-width="2.5" fill="none" stroke-linecap="round"/></g><rect x="474" y="1484" width="14" height="19" fill="#000"/><rect x="602" y="1484" width="8" height="19" fill="#000"/><rect x="613" y="1484" width="15" height="19" fill="#000"/><rect x="631" y="1488" width="19" height="15" fill="#000"/><path d="M485.5 1513 V1527.5 H611.5 V1513" stroke="#000" stroke-width="2.5" fill="none"/></svg><div class="a" style="left:5px;top:1553px;width:2867px;height:2px;background:#e2e2e2"></div><div class="a" style="left:5px;top:1564px;width:2838px;height:132px;background:#fff"></div><div class="t" style="left:9px;top:1574.9px;font-size:23.2px;color:#e8a23a">Warning: Speed of straight connection '1043867046_1-&gt;33639862_0' reduced by 5.72 due to turning radius of 12.12 (length=7.34, angle=52.17).</div><div class="t" style="left:9px;top:1604.4px;font-size:23.2px;color:#e8a23a">Warning: Speed of straight connection '1043867046_1-&gt;33639862_1' reduced by 6.00 due to turning radius of 11.32 (length=6.83, angle=52.17).</div><div class="t" style="left:9px;top:1633.9px;font-size:23.2px;color:#e8a23a">Warning: Connection '-38061194#2_1-&gt;287449624_1' is only 0.00m short.</div><div class="t" style="left:9px;top:1664.2px;font-size:23.2px;color:#3c9a3c">done (95ms).</div><svg class="a" style="left:0;top:1564px" width="400" height="8"><path d="M88 5 h8 M124 5 h3 M256 5 h8" stroke="#e8a23a" stroke-width="2"/></svg><div class="a" style="left:2843px;top:1564px;width:30px;height:132px;background:repeating-conic-gradient(#e2e2e2 0 25%,#f8f8f8 0 50%) 0 0/4px 4px"></div><div class="a" style="left:2844px;top:1564px;width:29px;height:30px;background:#f0f0f0;border-top:2px solid #fff;border-left:2px solid #fff;border-right:3px solid #555;border-bottom:3px solid #6a6a6a"></div><svg class="a" style="left:2849px;top:1571px" width="20" height="14"><path d="M2 12 L18 12 L10 3 Z" fill="#000"/></svg><div class="a" style="left:2844px;top:1648px;width:29px;height:14px;background:#f0f0f0;border-top:2px solid #fff;border-left:2px solid #fff;border-right:3px solid #555;border-bottom:3px solid #6a6a6a"></div><div class="a" style="left:2844px;top:1664px;width:29px;height:30px;background:#f0f0f0;border-top:2px solid #fff;border-left:2px solid #fff;border-right:3px solid #555;border-bottom:3px solid #6a6a6a"></div><svg class="a" style="left:2849px;top:1672px" width="20" height="14"><path d="M2 3 L18 3 L10 12 Z" fill="#000"/></svg><div class="a" style="left:10px;top:1700px;width:2090px;height:60px;border-top:2px solid #a0a0a0;border-left:2px solid #a0a0a0"></div><div class="a" style="left:2110px;top:1700px;width:236px;height:60px;border-top:2px solid #a0a0a0;border-left:2px solid #a0a0a0"></div><div class="a" style="left:2356px;top:1700px;width:296px;height:60px;border-top:2px solid #a0a0a0;border-left:2px solid #a0a0a0"></div><div class="a" style="left:2662px;top:1700px;width:202px;height:60px;border-top:2px solid #a0a0a0;border-left:2px solid #a0a0a0;background:#f2f8d2"></div><div class="a" style="left:2744px;top:1707px;width:39px;height:39px;border-radius:50%;background:#52a888"></div><div class="a" style="left:0;top:1720px;width:2880px;height:30px;background:#242424"></div><div class="a" style="left:0;top:1750px;width:2880px;height:50px;background:#05060b"></div><div class="t" style="left:2115px;top:1715.8px;font-size:22.7px;color:#3a3a3a">x:14837.06, y:19058.86</div><div class="t" style="left:2360px;top:1715.8px;font-size:22.7px;color:#3a3a3a">lat:54.974308, lon:-1.605351</div><div class="a" style="left:2110px;top:1720px;width:2px;height:30px;background:#303030"></div><div class="a" style="left:2356px;top:1720px;width:2px;height:30px;background:#303030"></div><div class="a" style="left:2662px;top:1720px;width:2px;height:30px;background:#303030"></div><div class="a" style="left:10px;top:1720px;width:2px;height:30px;background:#303030"></div><div class="a" style="left:2744px;top:1720px;width:39px;height:26px;border-radius:0 0 20px 20px;background:#1d3a30"></div><svg class="a" style="left:0;top:1720px" width="1300" height="80"><path d="M32 26 L45 24 V39 H32 Z M47 23.5 L65 21 V39 H47 Z M32 41 H45 V55.5 L32 54 Z M47 41 H65 V58 L47 55.8 Z" fill="#fff"/><circle cx="149.3" cy="34.4" r="10" stroke="#fff" stroke-width="3.5" fill="none"/><path d="M142 42 L129 55" stroke="#fff" stroke-width="3.5"/><path d="M225 23 h6 M225 23 v4 M231 27 h20 v24 h-20 v-24 M225 57 h6 M225 57 v-4 M257 23 h-3 M257 57 h-3 M258 30 v20" stroke="#fff" stroke-width="3" fill="none"/><circle cx="342" cy="40" r="17" fill="#2a8ee6"/><circle cx="343" cy="38" r="9" fill="#05060b"/><rect x="330" y="38" width="28" height="5" fill="#2a8ee6"/><path d="M322 58 Q318 50 345 30 Q368 14 362 26" stroke="#f0b020" stroke-width="3.5" fill="none"/><path d="M418 27 h16 l4 4 h22 v28 h-42 Z" fill="#f4d070"/><rect x="418" y="33" width="42" height="26" fill="#fbe39a"/><path d="M432 60 v-10 h14 v10" stroke="#2f8ee0" stroke-width="5" fill="none"/><circle cx="537" cy="42" r="19" fill="#f06a20"/><circle cx="539" cy="40" r="10" fill="#6a3ad0"/><path d="M520 35 Q530 14 552 22 Q545 26 540 28" fill="#ffb020"/><circle cx="634" cy="38" r="16" stroke="#8dc63f" stroke-width="7" fill="none"/><path d="M640 44 L654 58" stroke="#8dc63f" stroke-width="7"/><path d="M630 36 L642 48" stroke="#ee7913" stroke-width="5"/><path d="M713 50 L724 24 L752 22 L745 58 L716 58 Z" fill="#b8dcf0"/><path d="M716 58 L745 58 L752 22" stroke="#7fb0d0" stroke-width="2" fill="none"/><rect x="809" y="24" width="44" height="36" fill="#1f7346"/><rect x="831" y="28" width="20" height="28" fill="#fff"/><path d="M835 34 h14 M835 40 h14 M835 46 h14 M842 30 v24" stroke="#1f7346" stroke-width="2"/><text x="815" y="50" font-family="Liberation Sans" font-size="20" font-weight="bold" fill="#fff">X</text><rect x="906" y="22" width="46" height="40" rx="3" fill="#2a9a48" stroke="#fff" stroke-width="2"/><path d="M914 36 L936 28 L944 32 L922 42 L940 40 L916 54 L934 52" stroke="#fff" stroke-width="4" fill="none"/><path d="M1005 24 h34 v36 h-34 Z" fill="#f0f0f0"/><rect x="1005" y="42" width="34" height="18" fill="#8fd05f"/><path d="M1030 52 L1050 20" stroke="#f0c040" stroke-width="4"/><path d="M1012 32 v14 M1016 34 h6" stroke="#333" stroke-width="2"/><rect x="1102" y="24" width="46" height="36" fill="#000" stroke="#c8c8c8" stroke-width="2"/><rect x="1102" y="24" width="46" height="5" fill="#c8c8c8"/><path d="M1108 38 h10 M1124 44 h14" stroke="#c8c8c8" stroke-width="2"/><rect x="1176" y="0" width="96" height="80" fill="#3a3a3a" opacity="0.55"/><g transform="translate(1201,17) scale(1.45)"><rect x="1" y="1" width="31" height="31" fill="#3a3a36" stroke="#ddd" stroke-width="1.5"/><path d="M12 9.5 L29 13.5" stroke="#f4dc40" stroke-width="3.5" stroke-linecap="round"/><path d="M9 12 L23 18.5 L9 26.5 L25 22.5" stroke="#f4dc40" stroke-width="4" fill="none" stroke-linejoin="round" stroke-linecap="round"/><path d="M4 24 L12 18" stroke="#e8d040" stroke-width="2.5" stroke-linecap="round"/></g><rect x="400" y="76" width="79" height="4" fill="#8fb8e8"/><rect x="596" y="76" width="80" height="4" fill="#8fb8e8"/><rect x="694" y="76" width="81" height="4" fill="#8fb8e8"/><rect x="792" y="76" width="80" height="4" fill="#8fb8e8"/><rect x="890" y="76" width="80" height="4" fill="#8fb8e8"/><rect x="988" y="76" width="80" height="4" fill="#8fb8e8"/><rect x="1086" y="76" width="80" height="4" fill="#8fb8e8"/><rect x="1176" y="76" width="96" height="4" fill="#8fb8e8"/></svg><svg class="a" style="left:2420px;top:1720px" width="460" height="80"><path d="M12 46 L23 35 L34 46" stroke="#fff" stroke-width="2.5" fill="none"/><rect x="63" y="27" width="24" height="18" stroke="#fff" stroke-width="2.5" fill="none"/><path d="M75 45 v6 M67 52 h16" stroke="#fff" stroke-width="2.5"/><rect x="54" y="24" width="8" height="8" stroke="#fff" stroke-width="2" fill="none"/><path d="M103 33 h6 l8 -8 v30 l-8 -8 h-6 Z" stroke="#fff" stroke-width="2.5" fill="none"/><path d="M122 34 q4 6 0 12 M127 30 q7 10 0 20 M132 26 q9 14 0 28" stroke="#fff" stroke-width="2.5" fill="none"/><path d="M377 22 h32 v24 h-20 l-8 7 v-7 h-4 Z" fill="#fff"/><path d="M383 29 h20 M383 35 h20" stroke="#05060b" stroke-width="2"/><circle cx="407.5" cy="53.7" r="14" fill="#2a2a2a" stroke="#555" stroke-width="2"/><text x="401" y="61" font-family="Liberation Sans" font-size="19" fill="#fff">1</text></svg><div class="t" style="left:2574px;top:1747.7px;font-size:24px;color:#fff">POR</div><div class="t" style="left:2676px;top:1729.5px;font-size:23px;color:#fff">19:28</div><div class="t" style="left:2645px;top:1766.5px;font-size:23px;color:#fff">23/09/2024</div></body></html>
